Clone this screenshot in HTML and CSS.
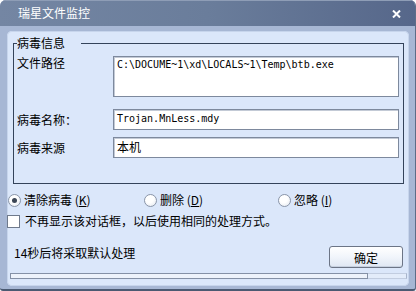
FILE: index.html
```html
<!DOCTYPE html>
<html lang="zh-CN">
    <head>
        <meta charset="utf-8">
        <title>瑞星文件监控</title>
        <link rel="stylesheet" href="styles.css">
    </head>
    <body>
        <div class="window">
            <div class="titlebar">
                <span class="title">瑞星文件监控</span>
                <svg class="close" width="9" height="8" viewBox="0 0 9 8">
                    <path d="M1 0.5 L8 7.5 M8 0.5 L1 7.5" stroke="#fff" stroke-width="2"/>
                </svg>
            </div>

            <div class="panel">
                <fieldset class="group">
                    <legend>病毒信息</legend>
                    <div class="row row-path">
                        <span class="label">文件路径</span>
                        <div class="field field-tall mono">C:\DOCUME~1\xd\LOCALS~1\Temp\btb.exe</div>
                    </div>
                    <div class="row row-name">
                        <span class="label">病毒名称：</span>
                        <div class="field mono">Trojan.MnLess.mdy</div>
                    </div>
                    <div class="row row-src">
                        <span class="label">病毒来源</span>
                        <div class="field">本机</div>
                    </div>
                </fieldset>

                <div class="options">
                    <span class="opt opt1"><i class="radio on"></i>清除病毒 (<u>K</u>)</span>
                    <span class="opt opt2"><i class="radio"></i>删除 (<u>D</u>)</span>
                    <span class="opt"><i class="radio"></i>忽略 (<u>I</u>)</span>
                </div>

                <div class="check"><i class="box"></i>不再显示该对话框，以后使用相同的处理方式。</div>

                <div class="footer">
                    <span class="countdown">14秒后将采取默认处理</span>
                    <button class="btn">确定</button>
                </div>

                <div class="progress"><div class="progress-fill" style="width: 358px"></div></div>
            </div>
        </div>
    </body>
</html>
```

FILE: styles.css
```css
/* 창 전체 */
body{
    margin: 0;
    font-family: "Noto Sans CJK SC", "Liberation Sans", sans-serif;
    font-size: 12px;
    color: #000;
    background: #fff;
}
.window{
    width: 416px;
    height: 291px;
    box-sizing: border-box;
    display: flex;
    flex-direction: column;
    background: #a7b7d4;
    border-radius: 6px 6px 3px 3px;
    border-right: 1px solid #5d6d87;
    border-bottom: 2px solid #4b5a72;
    overflow: hidden;
}

/* 제목줄 */
.titlebar{
    height: 26px;
    flex: none;
    display: flex;
    align-items: center;
    justify-content: space-between;
    padding: 0 14px 0 18px;
    background: linear-gradient(to right, #7486a3, #6a7d9b 50%, #56678a);
    color: #fff;
    box-shadow: inset 0 1px 0 #8e9db6;
}
.title{
    line-height: 14px;
}
.close{
    display: block;
    margin-top: 1px;
}

/* 안쪽 판 */
.panel{
    flex: 1;
    margin: 5px 6px 3px 7px;
    padding: 5px 0 0;
    background: #dbe7fa;
    border-radius: 5px;
    box-shadow: inset 0 0 0 1px #c7d5ec;
    display: flex;
    flex-direction: column;
}

/* 그룹 상자 */
.group{
    margin: 0 5px 0 6px;
    padding: 0 4px 25px 3px;
    border: 1px solid #34435a;
    min-width: 0;
}
.group legend{
    padding: 0 16px 0 0;
    line-height: 14px;
}
.row{
    display: grid;
    grid-template-columns: 96px 1fr;
    align-items: center;
}
.row-path{
    align-items: start;
    margin-top: 6px;
}
.row-name{
    margin-top: 12px;
}
.row-src{
    margin-top: 7px;
}
.label{
    line-height: 14px;
}
.field{
    height: 21px;
    box-sizing: border-box;
    border: 1px solid #7d899d;
    box-shadow: inset 1px 1px 0 #c3cad6;
    background: #fff;
    padding: 0 3px;
    line-height: 18px;
    white-space: nowrap;
    overflow: hidden;
}
.field-tall{
    height: 41px;
    line-height: 13px;
    padding-top: 1px;
}
.mono{
    font-family: "DejaVu Sans Mono", "Liberation Mono", monospace;
    font-size: 10px;
}

/* 선택 단추 */
.options{
    display: flex;
    align-items: center;
    margin-top: 9px;
    padding-left: 1px;
    line-height: 14px;
}
.opt{
    display: flex;
    align-items: center;
}
.opt1{width: 136px;}
.opt2{width: 134px;}
.radio{
    width: 11px;
    height: 11px;
    border: 1px solid #8a95a8;
    border-radius: 50%;
    background: radial-gradient(circle at 40% 35%, #fff 40%, #dfe5ee);
    margin-right: 3px;
    position: relative;
}
.radio.on::after{
    content: "";
    position: absolute;
    left: 3px;
    top: 3px;
    width: 5px;
    height: 5px;
    border-radius: 50%;
    background: #3c4656;
}
u{
    text-decoration: underline;
}

.check{
    display: flex;
    align-items: center;
    margin-top: 7px;
    line-height: 14px;
}
.box{
    width: 11px;
    height: 11px;
    border: 1px solid #6f7a8c;
    background: #fff;
    margin-right: 5px;
}

/* 아래쪽 */
.footer{
    display: flex;
    justify-content: space-between;
    align-items: flex-start;
    margin: 18px 6px 0 7px;
}
.countdown{
    line-height: 14px;
}
.btn{
    width: 74px;
    height: 22px;
    padding: 0;
    font: inherit;
    border: 1px solid #6c7586;
    border-radius: 3px;
    background: linear-gradient(#ffffff, #f1f5fb 50%, #dfe7f3);
    box-shadow: inset 0 -1px 0 #c7d1e0;
    color: #000;
}

/* 진행 막대 */
.progress{
    height: 6px;
    margin: 5px 2px 0 3px;
    border: 1px solid #c2cde0;
    border-right-color: #a8b5cb;
    background: #e3ecfa;
    box-sizing: border-box;
}
.progress-fill{
    height: 6px;
    margin-top: -1px;
    margin-left: -1px;
    box-sizing: border-box;
    border: 1px solid #8591a6;
    background: #eef3fb;
}
```
